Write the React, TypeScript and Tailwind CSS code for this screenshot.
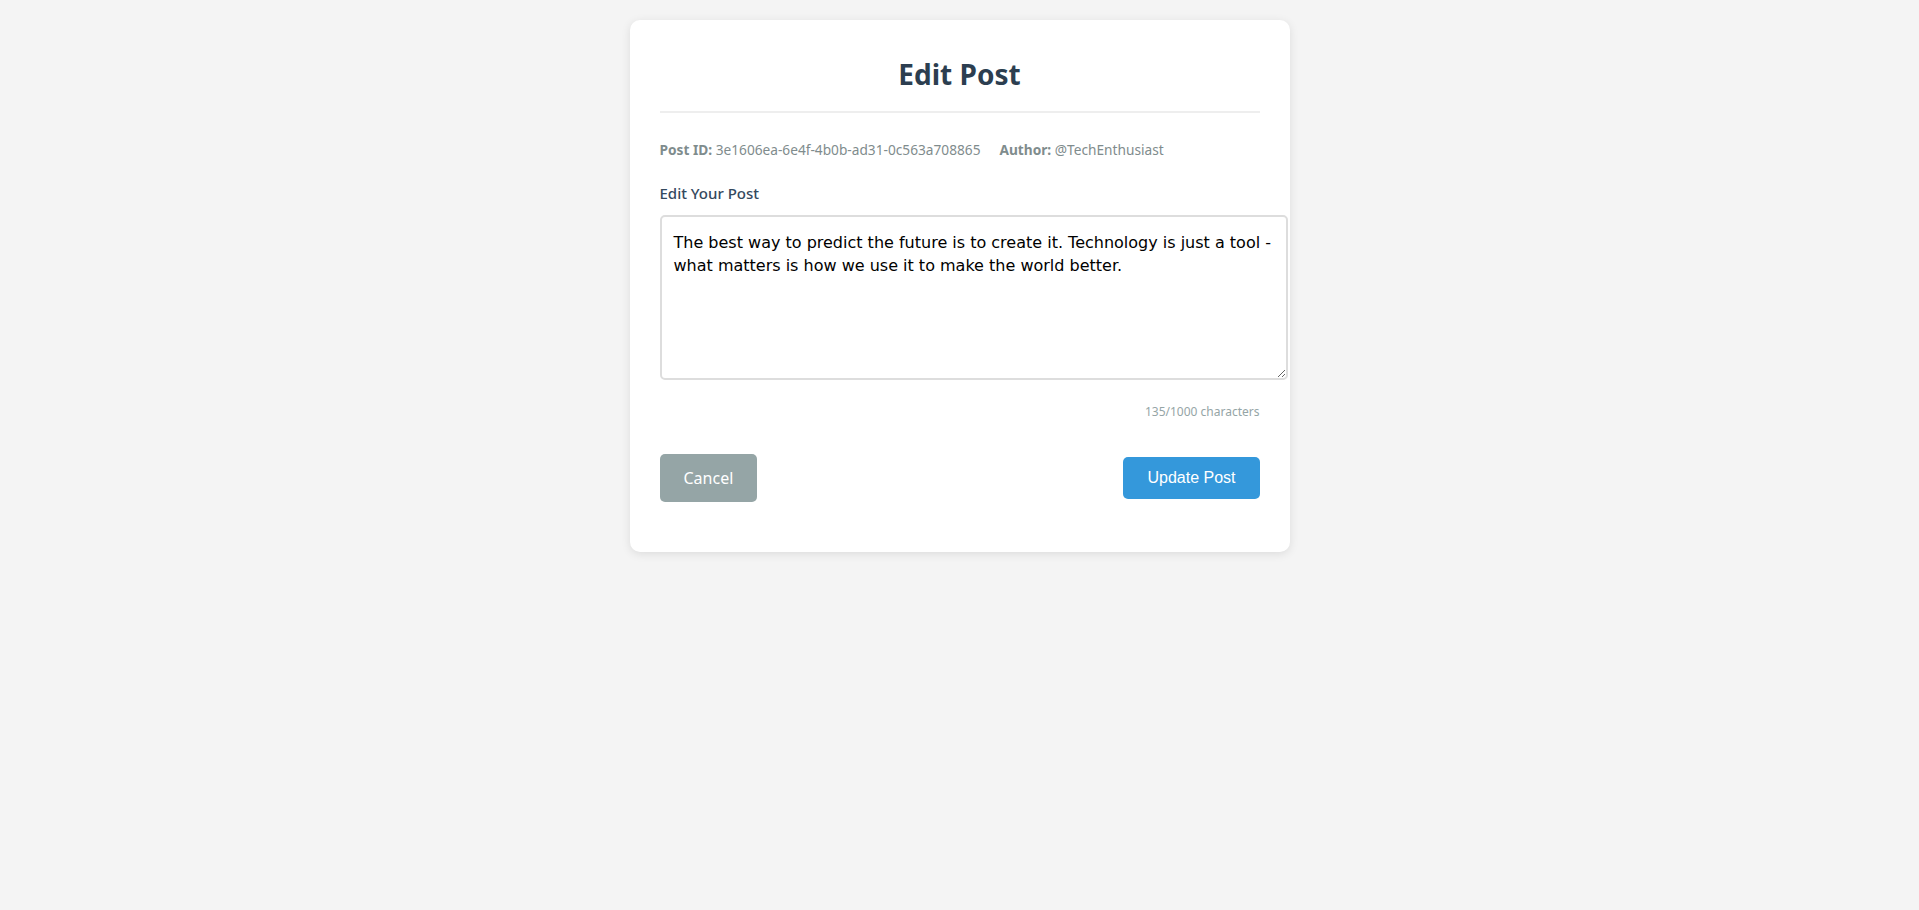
import React, { useState } from 'react'

const POST_ID = "3e1606ea-6e4f-4b0b-ad31-0c563a708865"
const AUTHOR = "@TechEnthusiast"
const INITIAL = "The best way to predict the future is to create it. Technology is just a tool - what matters is how we use it to make the world better."

export default function App() {
    const [content, setContent] = useState(INITIAL)

    return (
        <div className="min-h-screen bg-[#f4f4f4] pt-5 font-['Noto_Sans',sans-serif]">
            <div className="mx-auto w-[660px] bg-white rounded-[10px] shadow-[0_2px_10px_rgba(0,0,0,0.1)] px-[30px] pt-[34px] pb-[50px]">
                <h1 className="text-center text-[28px] leading-10 font-bold text-[#2c3e50] pb-[17px] border-b-2 border-[#eeeeee]">
                    Edit Post
                </h1>

                <div className="mt-[27px] flex text-[13.7px] leading-5 text-[#7f8c8d]">
                    <p className="mr-[19px]"><span className="font-bold">Post ID:</span> {POST_ID}</p>
                    <p><span className="font-bold">Author:</span> {AUTHOR}</p>
                </div>

                <label htmlFor="content" className="block mt-[22px] text-[15px] leading-[22px] font-medium text-[#34495e]">
                    Edit Your Post
                </label>
                <textarea
                    id="content"
                    value={content}
                    maxLength={1000}
                    onChange={(e) => setContent(e.target.value)}
                    className="block mt-[11px] w-[628px] h-[165px] border-2 border-[#dddddd] rounded-[5px] px-3 pt-[14px] pb-[10px] text-[16px] leading-[23px] text-black font-['Comic_Sans_MS','DejaVu_Sans',sans-serif] outline-none"
                />

                <p className="mt-6 text-right text-[12px] leading-4 text-[#95a5a6]">
                    {content.length}/1000 characters
                </p>

                <div className="mt-[34px] flex items-center justify-between">
                    <button className="h-12 px-6 rounded-[5px] bg-[#95a5a6] text-white text-[16px]">
                        Cancel
                    </button>
                    <button className="h-[42px] px-6 rounded-[5px] bg-[#3498db] text-white text-[16px] font-['Liberation_Sans',Arial,sans-serif]">
                        Update Post
                    </button>
                </div>
            </div>
        </div>
    )
}
